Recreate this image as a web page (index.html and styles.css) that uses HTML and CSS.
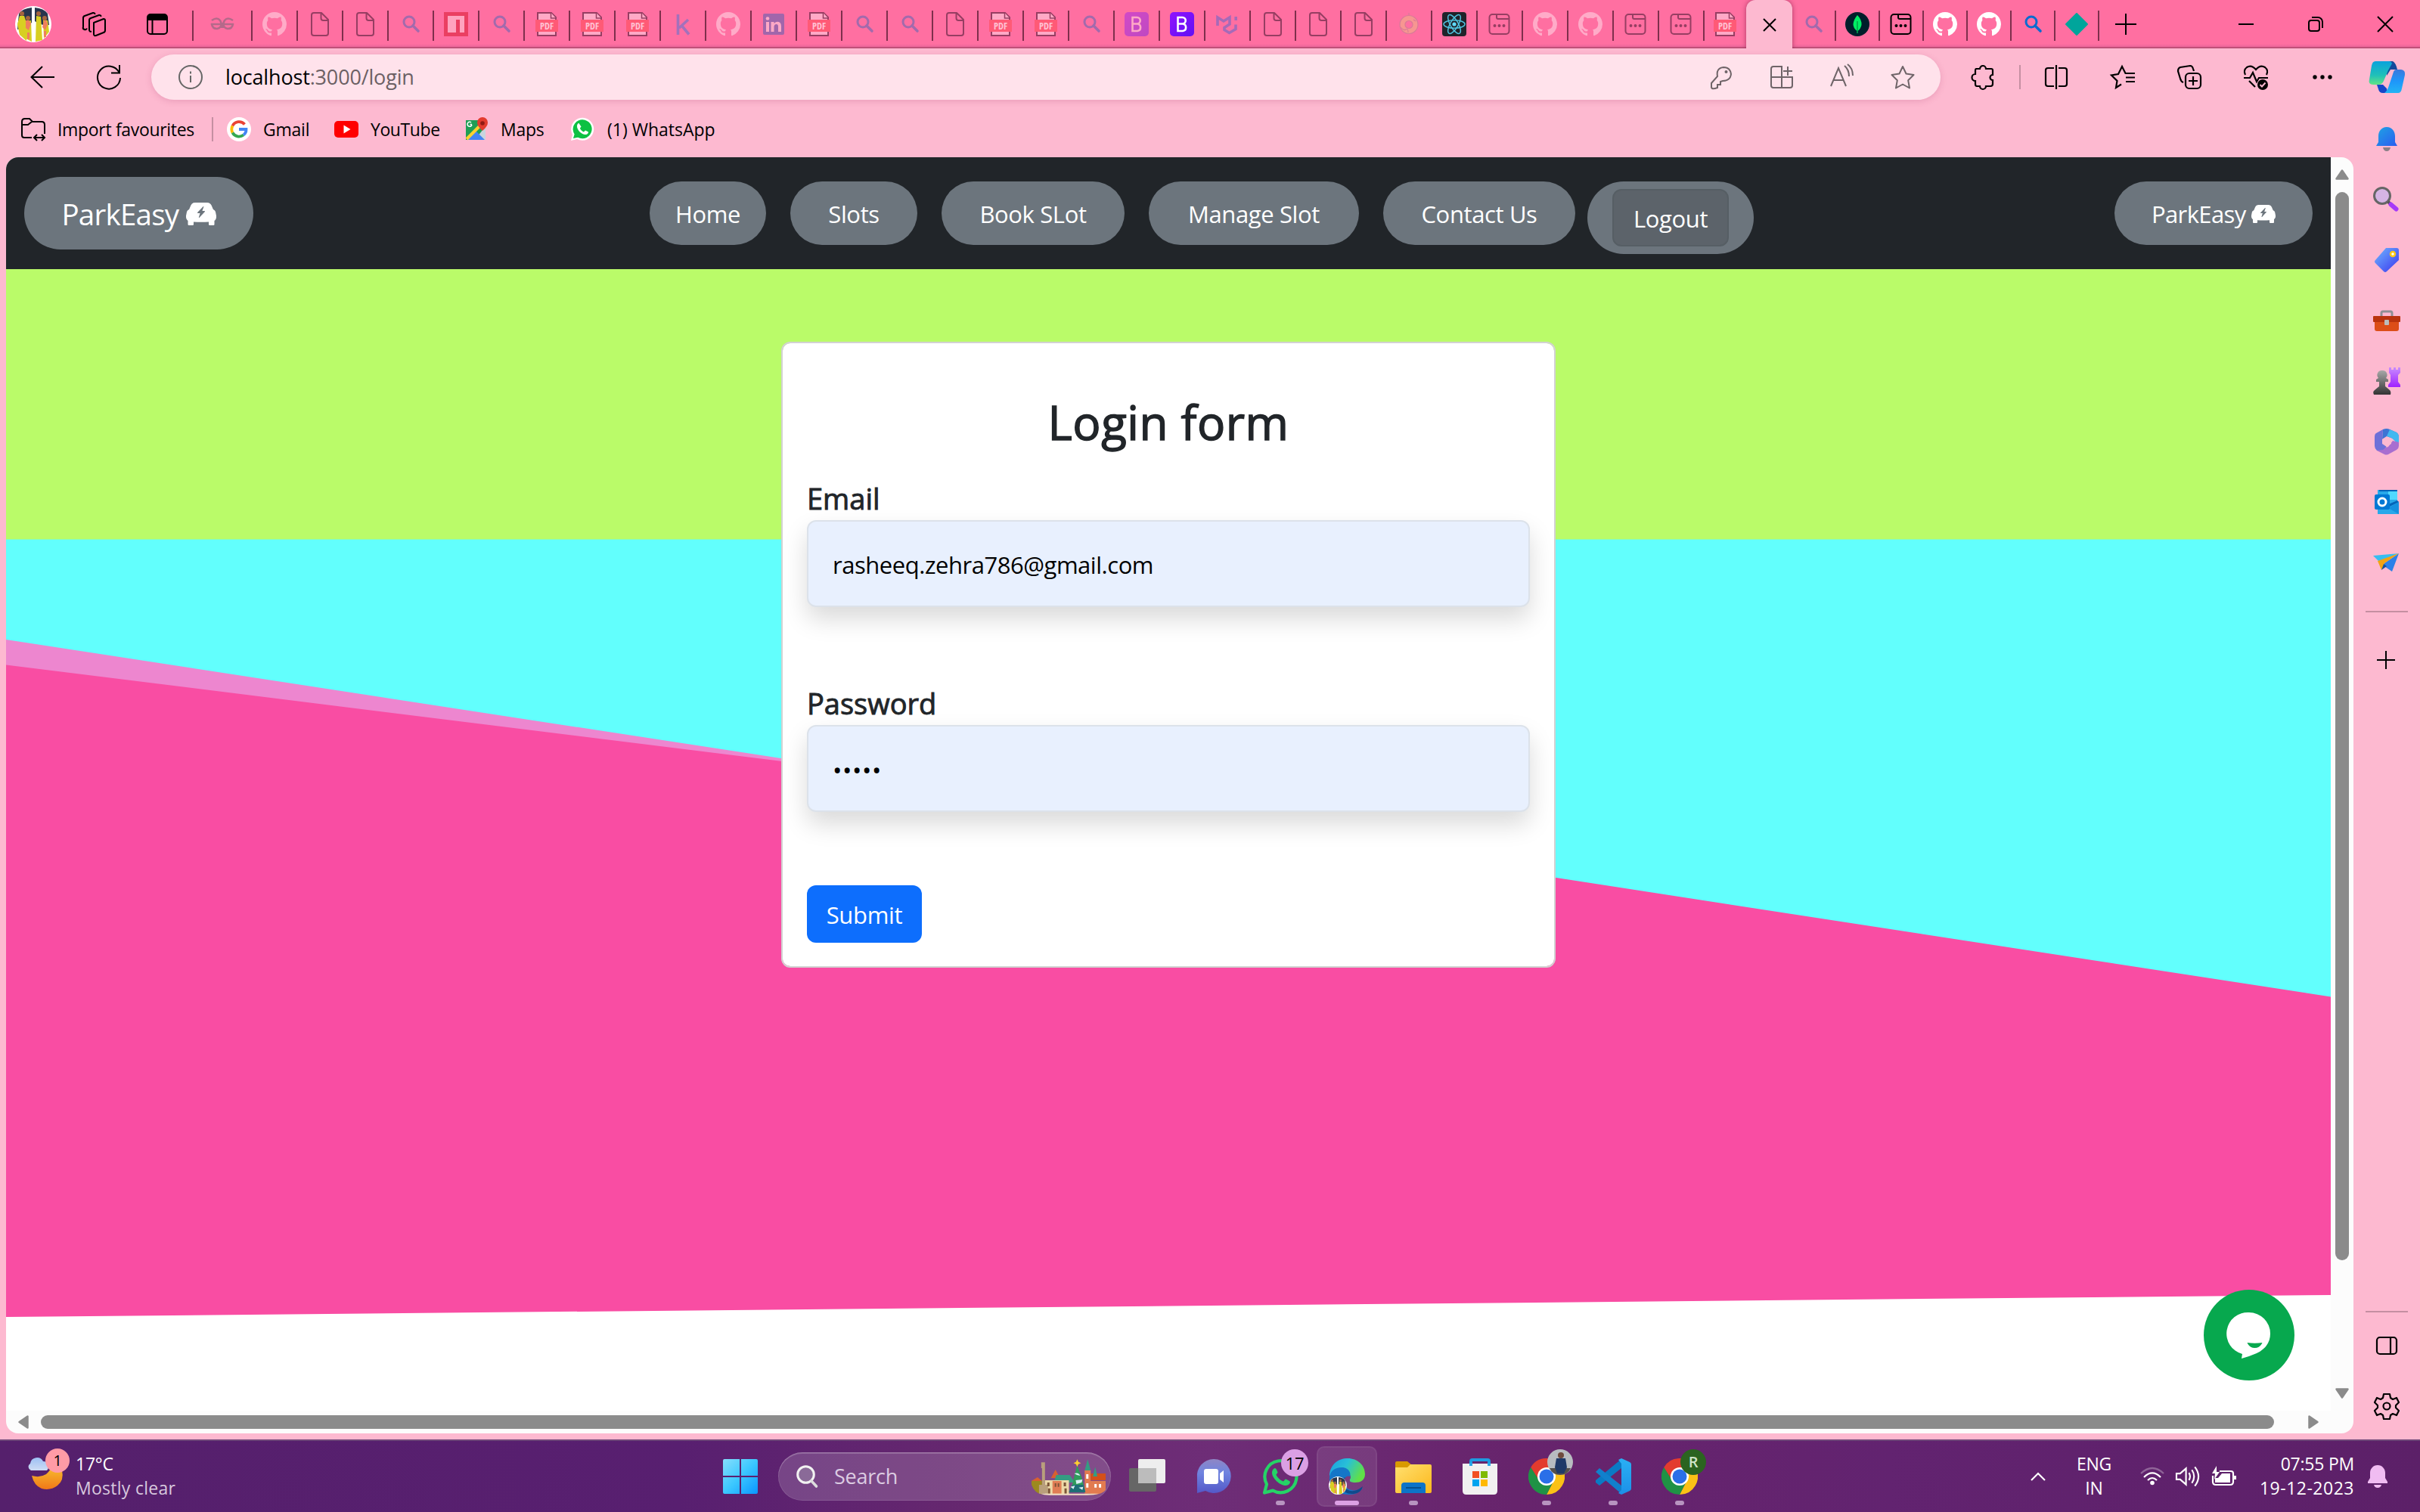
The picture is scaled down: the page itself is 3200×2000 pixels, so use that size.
FILE: index.html
```html
<!DOCTYPE html>
<html lang="en">
<head>
<meta charset="utf-8">
<title>ParkEasy - Login</title>
<link rel="stylesheet" href="styles.css">
</head>
<body>
<svg class="defs" width="0" height="0" aria-hidden="true">
  <defs>
    <linearGradient id="gBlue" x1="0" y1="0" x2="1" y2="1"><stop offset="0" stop-color="#1fa4e4"/><stop offset="1" stop-color="#2a5cf0"/></linearGradient>
    <linearGradient id="gTag" x1="0" y1="0" x2="1" y2="1"><stop offset="0" stop-color="#70b8ff"/><stop offset="1" stop-color="#3a34ee"/></linearGradient>
    <linearGradient id="gGrey" x1="0" y1="0" x2="0" y2="1"><stop offset="0" stop-color="#a8a8a8"/><stop offset="1" stop-color="#333"/></linearGradient>
    <linearGradient id="gPurple" x1="0" y1="0" x2="0" y2="1"><stop offset="0" stop-color="#c88cff"/><stop offset="1" stop-color="#a020ff"/></linearGradient>
    <linearGradient id="gCopA" x1="0" y1="0" x2="0" y2="1"><stop offset="0" stop-color="#0aa2dc"/><stop offset=".6" stop-color="#20c0b8"/><stop offset="1" stop-color="#62e484"/></linearGradient>
    <linearGradient id="gCopB" x1="0" y1="0" x2="0" y2="1"><stop offset="0" stop-color="#3a78dc"/><stop offset=".5" stop-color="#1e96fa"/><stop offset="1" stop-color="#22b4f4"/></linearGradient>
    <linearGradient id="gWin" x1="0" y1="0" x2="1" y2="1"><stop offset="0" stop-color="#86dffc"/><stop offset=".5" stop-color="#3cc8ff"/><stop offset="1" stop-color="#0a96ff"/></linearGradient>
    <linearGradient id="gMoon" x1="0" y1="0" x2="0" y2="1"><stop offset="0" stop-color="#f8c030"/><stop offset="1" stop-color="#f07818"/></linearGradient>
    <linearGradient id="gCloud" x1="0" y1="0" x2="0" y2="1"><stop offset="0" stop-color="#9cc0f4"/><stop offset="1" stop-color="#cfdcf4"/></linearGradient>
    <linearGradient id="gChat" x1="0" y1="0" x2="0" y2="1"><stop offset="0" stop-color="#8f86c4"/><stop offset=".4" stop-color="#6f84e0"/><stop offset="1" stop-color="#5458c8"/></linearGradient>
    <linearGradient id="gEdge" x1="0" y1="0" x2="1" y2=".4"><stop offset="0" stop-color="#1a9ce0"/><stop offset=".5" stop-color="#28c0d8"/><stop offset="1" stop-color="#60e048"/></linearGradient>
    <linearGradient id="gFold" x1="0" y1="0" x2="1" y2="1"><stop offset="0" stop-color="#ffe070"/><stop offset="1" stop-color="#fcb81c"/></linearGradient>
    <linearGradient id="gVs" x1="0" y1="0" x2="0" y2="1"><stop offset="0" stop-color="#2ab0f4"/><stop offset="1" stop-color="#1c90e8"/></linearGradient>
    <linearGradient id="gBoot" x1="0" y1="0" x2="1" y2="1"><stop offset="0" stop-color="#9013fe"/><stop offset="1" stop-color="#6010f4"/></linearGradient>
  </defs>
  <symbol id="github" viewBox="0 0 16 16"><path fill="currentColor" d="M8 0C3.580 0 0 3.580 0 8c0 3.540 2.290 6.530 5.470 7.590.4.07.55-.17.55-.38 0-.19-.01-.82-.01-1.490-2.010.37-2.530-.49-2.690-.94-.09-.23-.48-.94-.82-1.130-.28-.15-.68-.52-.01-.53.63-.01 1.080.58 1.230.82.72 1.210 1.870.87 2.330.66.07-.52.28-.87.51-1.070-1.780-.2-3.640-.89-3.640-3.950 0-.87.31-1.590.82-2.150-.08-.2-.36-1.020.08-2.120 0 0 .67-.21 2.200.82.64-.18 1.320-.27 2-.27s1.360.09 2 .27c1.530-1.040 2.200-.82 2.200-.82.44 1.100.16 1.920.08 2.120.51.56.82 1.270.82 2.150 0 3.070-1.870 3.750-3.650 3.950.29.25.54.73.54 1.480 0 1.070-.01 1.930-.01 2.200 0 .21.15.46.55.38A8.010 8.010 0 0 0 16 8c0-4.420-3.580-8-8-8z"/></symbol>
  <symbol id="file" viewBox="0 0 32 32"><path fill="none" stroke="currentColor" stroke-width="2" stroke-linejoin="round" d="M8 1h10l9 9v18a3 3 0 0 1-3 3H8a3 3 0 0 1-3-3V4a3 3 0 0 1 3-3zM17.500 1.500V8a3 3 0 0 0 3 3H27"/></symbol>
  <symbol id="loupe" viewBox="0 0 32 32"><g fill="none" stroke="currentColor"><circle cx="14" cy="13" r="7" stroke-width="3"/><path d="M19 18l7 7" stroke-width="3.600" stroke-linecap="round"/></g></symbol>
  <symbol id="pdf" viewBox="0 0 32 32"><path fill="#ffa9c6" stroke="#963e62" stroke-width="2" d="M4 1h18l6 6v24H4z"/><path fill="#ffa9c6" stroke="#963e62" stroke-width="1.500" d="M21.500 1v7H28"/><path fill="#ff5a76" d="M1 10h30v16H1z"/><text x="16" y="22.500" text-anchor="middle" class="pdf-label">PDF</text></symbol>
  <symbol id="npm" viewBox="0 0 32 32"><path fill="#ea3f62" d="M0 0h32v32H0z"/><path fill="#ffa3bf" d="M5 5h22v22h-6V10h-5v17H5z"/></symbol>
  <symbol id="windowdots" viewBox="0 0 32 32"><g fill="none" stroke="currentColor" stroke-width="2"><rect x="2.500" y="3" width="26" height="26" rx="4"/><path d="M12 3v4a2 2 0 0 0 2 2h14"/></g><g fill="currentColor"><circle cx="9.500" cy="18" r="2"/><circle cx="15.500" cy="18" r="2"/><circle cx="21.500" cy="18" r="2"/></g></symbol>
  <symbol id="boot" viewBox="0 0 32 32"><rect width="32" height="32" rx="5" fill="url(#gBoot)"/><path fill="none" stroke="#fff" stroke-width="2.600" d="M10.500 7v18h6.500a4.800 4.800 0 0 0 0-9.500h-6.500h6a4.200 4.200 0 0 0 0-8.500z"/></symbol>
  <symbol id="mui" viewBox="0 0 32 32"><path fill="none" stroke="#a66ab8" stroke-width="3.600" d="M3 18V7l8 5 8-5v9l-7 4.500v3l6.500 4 8.500-5v-6M27.200 11V6"/></symbol>
  <symbol id="react" viewBox="0 0 32 32"><rect width="32" height="32" rx="4" fill="#20232a"/><g fill="none" stroke="#4fc3e0" stroke-width="1.500"><ellipse cx="16" cy="16" rx="14" ry="5.200"/><ellipse cx="16" cy="16" rx="14" ry="5.200" transform="rotate(60 16 16)"/><ellipse cx="16" cy="16" rx="14" ry="5.200" transform="rotate(120 16 16)"/></g><circle cx="16" cy="16" r="2.600" fill="#61dafb"/></symbol>
  <symbol id="people" viewBox="0 0 48 48"><circle cx="24" cy="24" r="24" fill="#fff"/><path fill="#27354d" d="M5 10q5-7 17-8v20Q8 30 3 31zM26 2q12 1 17 8l2 15q-9 2-19-5z"/><g fill="#d8cf22"><path d="M6 13h6l3 9v24l-9-8-3-14zM28 13l6 1 2 31-9 2zM14 20l7-1 1 28-8-4zM37 18l6 1 2 15-7 9z"/></g><g fill="#ef7e5c"><path d="M14 19h4l3 4-3 9-4-3zM38 19h3l2 5-3 8-4-4zM16 35h3v9h-3zM38 33h3v8h-3z"/></g><g fill="#a5643f"><circle cx="9" cy="10" r="3"/><circle cx="17" cy="16" r="3"/><circle cx="31" cy="10" r="3"/><circle cx="39" cy="16" r="3"/></g></symbol>
  <symbol id="car" viewBox="0 0 16 16"><path fill="#fff" d="M2.520 3.515A2.500 2.500 0 0 1 4.820 2h6.362c1 0 1.904.596 2.298 1.515l.792 1.848c.075.175.21.319.38.404.5.25.855.715.965 1.262l.335 1.679q.05.242.049.49v.413c0 .814-.39 1.543-1 1.997V13.500a.5.5 0 0 1-.5.5h-2a.5.5 0 0 1-.5-.5v-1.338c-1.292.048-2.745.088-4 .088s-2.708-.04-4-.088V13.500a.5.5 0 0 1-.5.5h-2a.5.5 0 0 1-.5-.5v-1.892c-.61-.454-1-1.183-1-1.997v-.413a2.500 2.500 0 0 1 .049-.49l.335-1.680c.11-.546.465-1.012.964-1.261a.8.8 0 0 0 .381-.404l.792-1.848Zm6.750.51a.186.186 0 0 0-.23.034L6.050 7.246a.188.188 0 0 0 .137.316h1.241l-.673 2.195a.19.19 0 0 0 .085.218c.075.043.17.03.23-.034l2.880-3.187a.188.188 0 0 0-.137-.316H8.572l.782-2.195a.19.19 0 0 0-.085-.218Z"/></symbol>
  <symbol id="whats" viewBox="0 0 48 48"><path fill="none" stroke="currentColor" stroke-width="4.200" stroke-linejoin="round" d="M3 45.500l3-11.200A21 21 0 1 1 14.200 42.600z"/><path fill="currentColor" d="M17 13c-1 0-4 2-4 6 0 7 10 17 18 17 4 0 6-3 6-5 0-1-4-3-6-3.600-1 0-2 2.600-3 3-3-.4-9-6-9.500-8.900.5-1 2-2 2-3C20 17 18.500 13 17 13z"/></symbol>
  <symbol id="chrome" viewBox="0 0 48 48"><path fill="#e33b2e" d="M3.200 12A24 24 0 0 1 44.800 12L24 13 14 30z"/><path fill="#fbc116" d="M44.800 12A24 24 0 0 1 24 48L33.500 29.500 24 12z"/><path fill="#1f9245" d="M24 48A24 24 0 0 1 3.200 12L14.500 29.500 24 35l9.500-5.500z"/><circle cx="24" cy="24" r="12" fill="#fff"/><circle cx="24" cy="24" r="9.500" fill="#2a6fe8"/></symbol>
</svg>

<header class="tabstrip">
  <div class="strip-tools">
    <svg class="avatar"><use href="#people"/></svg>
    <svg class="workspaces" viewBox="0 0 32 32"><g fill="none" stroke="#000" stroke-width="2" stroke-linejoin="round"><path d="M16 14l13-5a2 2 0 0 1 2 2v13a3 3 0 0 1-2 3l-10 4a2 2 0 0 1-3-2z"/><path d="M13 25.500a2 2 0 0 1-3-2V11a3 3 0 0 1 2-3l11-4a2 2 0 0 1 2.500 2"/><path d="M7 21.500a2 2 0 0 1-5-2V8a3 3 0 0 1 2-3l11-4a2 2 0 0 1 2.500 2"/></g></svg>
    <svg class="tabmenu" viewBox="0 0 28 28"><rect x="1" y="1" width="26" height="26" rx="4" fill="none" stroke="#000" stroke-width="2"/><path d="M1 9V4q0-3 3-3h20q3 0 3 3v5zM6.500 9h2v18h-2z"/></svg>
  </div>
  <nav class="tabs">
    <div class="tab tab-first"><svg viewBox="0 0 32 32"><g fill="none" stroke="#b5698a" stroke-width="2.600"><path d="M2 11q7-5 11 0 2 3 2 10M1 16h30M2 15v1q1 6 7 6 6-1 6-8M30 11q-7-5-11 0-2 3-2 10M30 15v1q-1 6-7 6-6-1-6-8"/></g></svg></div>
    <div class="tab dim-white"><svg><use href="#github"/></svg></div>
    <div class="tab dim"><svg><use href="#file"/></svg></div>
    <div class="tab dim"><svg><use href="#file"/></svg></div>
    <div class="tab dim-blue"><svg><use href="#loupe"/></svg></div>
    <div class="tab"><svg><use href="#npm"/></svg></div>
    <div class="tab dim-blue"><svg><use href="#loupe"/></svg></div>
    <div class="tab"><svg><use href="#pdf"/></svg></div>
    <div class="tab"><svg><use href="#pdf"/></svg></div>
    <div class="tab"><svg><use href="#pdf"/></svg></div>
    <div class="tab dim-blue"><svg viewBox="0 0 32 32"><path fill="none" stroke="#a371bb" stroke-width="3.600" d="M9.500 3v27M23 10L11 21M14.500 18L24 29.500"/></svg></div>
    <div class="tab dim-white"><svg><use href="#github"/></svg></div>
    <div class="tab"><svg viewBox="0 0 32 32"><rect x="2" y="2" width="28" height="28" rx="2" fill="#a166ab"/><g fill="#ffa9c6"><path d="M6 13h4v13H6zM12.500 13h4v2q4-4 8-1 1.500 1.500 1.500 5v7h-4v-7q0-3-2.500-3t-3 3v7h-4z"/><circle cx="8" cy="8.500" r="2.300"/></g></svg></div>
    <div class="tab"><svg><use href="#pdf"/></svg></div>
    <div class="tab dim-blue"><svg><use href="#loupe"/></svg></div>
    <div class="tab dim-blue"><svg><use href="#loupe"/></svg></div>
    <div class="tab dim"><svg><use href="#file"/></svg></div>
    <div class="tab"><svg><use href="#pdf"/></svg></div>
    <div class="tab"><svg><use href="#pdf"/></svg></div>
    <div class="tab dim-blue"><svg><use href="#loupe"/></svg></div>
    <div class="tab faded"><svg><use href="#boot"/></svg></div>
    <div class="tab"><svg><use href="#boot"/></svg></div>
    <div class="tab"><svg><use href="#mui"/></svg></div>
    <div class="tab dim"><svg><use href="#file"/></svg></div>
    <div class="tab dim"><svg><use href="#file"/></svg></div>
    <div class="tab dim"><svg><use href="#file"/></svg></div>
    <div class="tab"><svg viewBox="0 0 32 32"><circle cx="16" cy="16.500" r="8.500" fill="none" stroke="#f79691" stroke-width="7"/><g fill="none" stroke="#d97b98" stroke-width="1.200"><circle cx="16" cy="16.500" r="12"/><circle cx="16" cy="16.500" r="5"/><path d="M5 20q4 5 7 3t3 4M16 1v3M22 10l3 2"/></g></svg></div>
    <div class="tab"><svg><use href="#react"/></svg></div>
    <div class="tab dim"><svg><use href="#windowdots"/></svg></div>
    <div class="tab dim-white"><svg><use href="#github"/></svg></div>
    <div class="tab dim-white"><svg><use href="#github"/></svg></div>
    <div class="tab dim"><svg><use href="#windowdots"/></svg></div>
    <div class="tab dim"><svg><use href="#windowdots"/></svg></div>
    <div class="tab tab-last"><svg><use href="#pdf"/></svg></div>
    <div class="tab-active"><svg viewBox="0 0 18 18"><path d="M1 1l16 16M17 1L1 17" stroke="#000" stroke-width="2"/></svg></div>
    <div class="tab narrow dim-blue"><svg><use href="#loupe"/></svg></div>
    <div class="tab narrow"><svg viewBox="0 0 32 32"><circle cx="16" cy="16" r="16" fill="#001e2b"/><path fill="#00ed64" d="M16 4q6 6 5.500 13-1 5-5 8v3h-1v-3q-5-4-5-9Q11 10 16 4z"/><path d="M16 12v13" stroke="#007a38"/></svg></div>
    <div class="tab narrow"><svg><use href="#windowdots"/></svg></div>
    <div class="tab narrow white"><svg><use href="#github"/></svg></div>
    <div class="tab narrow white"><svg><use href="#github"/></svg></div>
    <div class="tab narrow blue"><svg><use href="#loupe"/></svg></div>
    <div class="tab narrow"><svg viewBox="0 0 32 32"><path fill="#00a59b" stroke="#00a59b" stroke-width="2" stroke-linejoin="round" d="M16 2l14 14-14 14L2 16z"/></svg></div>
  </nav>
  <svg class="newtab" viewBox="0 0 28 28"><path d="M14 0v28M0 14h28" stroke="#000" stroke-width="2"/></svg>
  <div class="winctl">
    <svg viewBox="0 0 20 20"><path d="M0 10h20" stroke="#000" stroke-width="2"/></svg>
    <svg viewBox="0 0 20 20"><g fill="none" stroke="#000" stroke-width="2"><rect x="1" y="5" width="14" height="14" rx="3"/><path d="M5 1h8a6 6 0 0 1 6 6v8"/></g></svg>
    <svg viewBox="0 0 20 20"><path d="M0 0l20 20M20 0L0 20" stroke="#000" stroke-width="2"/></svg>
  </div>
</header>

<div class="toolbar">
  <svg class="ic32" viewBox="0 0 32 32"><path d="M32 16H1M16 2L1.500 16 16 30" fill="none" stroke="#000" stroke-width="2"/></svg>
  <svg class="ic32 reload" viewBox="0 0 32 32"><path d="M29.500 10A15 15 0 1 0 31 17M30 0v10.500H19" fill="none" stroke="#000" stroke-width="2"/></svg>
  <div class="address">
    <svg class="ic32" viewBox="0 0 32 32"><g fill="none" stroke="#666" stroke-width="2"><circle cx="16" cy="16" r="15"/><path d="M16 14v9M16 8.500v3"/></g></svg>
    <span class="url"><b>localhost</b>:3000/login</span>
    <div class="address-tools">
      <svg viewBox="0 0 32 32"><g fill="none" stroke="#6f6468" stroke-width="2"><path d="M11 15q-2-11 8-12 9 0 10 9-1 9-11 9l-3 1v4h-4v4q-8 3-8-1v-5z"/></g><circle cx="22.500" cy="9" r="2" fill="#6f6468"/></svg>
      <svg viewBox="0 0 32 32"><path d="M2 5q0-3 3-3h11v28H5q-3 0-3-3zM2 16h28v11q0 3-3 3H16M24 2v12M18 8h12" fill="none" stroke="#6f6468" stroke-width="2"/></svg>
      <svg viewBox="0 0 32 32"><path d="M1 28L11 4l10 24M4.500 20h13M19 1q6 5 6 14M23-1q7 5 7 15" fill="none" stroke="#6f6468" stroke-width="2"/></svg>
      <svg viewBox="0 0 32 32"><path d="M16 2l4.500 9.500 10 1.500-7.300 7.300 1.800 10.200-9-5-9 5 1.800-10.200L1.500 13l10-1.500z" fill="none" stroke="#6f6468" stroke-width="2" stroke-linejoin="round"/></svg>
    </div>
  </div>
  <div class="cell puzzle"><svg viewBox="0 0 32 32"><path d="M7 5h5a4 4 0 0 1 8 0h7q2 0 2 2v6a3.500 3.500 0 0 0 0 7v5q0 3-3 3h-6a4 4 0 0 1-8 0H8q-2 0-2-3v-4a4 4 0 0 1 0-9V8q0-3 1-3z" fill="none" stroke="#000" stroke-width="2.200"/></svg></div>
  <i class="vsep"></i>
  <div class="cell"><svg viewBox="0 0 32 32"><path d="M13 4H5Q2 4 2 7v18q0 3 3 3h8M19 4h8q3 0 3 3v18q0 3-3 3h-8M16 0v32" fill="none" stroke="#000" stroke-width="2.200"/></svg></div>
  <div class="cell"><svg viewBox="0 0 32 32"><path d="M14 25.500L7 30l1.500-9L1 13.500l9-1.500L15 2l4.500 9H32M20 16.500h12M20 22h12" fill="none" stroke="#000" stroke-width="2.200"/></svg></div>
  <div class="cell"><svg viewBox="0 0 32 32"><g fill="none" stroke="#000" stroke-width="2.200"><rect x="11" y="11" width="20" height="20" rx="5"/><path d="M21 15v12M15 21h12M8 23q-3-1-4-5L1 8q0-4 3-5l13-2q3 0 4 4l1 3"/></g></svg></div>
  <div class="cell"><svg viewBox="0 0 32 32"><path d="M2 13Q-1 7 4 3q6-4 12 3 6-7 12-3 5 4 2 10M0 17h8l4-7 5 12 3-5h12M7 21l8 8" fill="none" stroke="#000" stroke-width="2.200"/><circle cx="25" cy="26" r="7"/><path d="M21.500 26l2.500 2.500 4.500-5" stroke="#fdb9d0" stroke-width="2" fill="none"/></svg></div>
  <div class="cell"><svg viewBox="0 0 32 32"><circle cx="6" cy="16" r="2.700"/><circle cx="16" cy="16" r="2.700"/><circle cx="26" cy="16" r="2.700"/></svg></div>
  <svg class="copilot" viewBox="0 0 48 42"><path fill="#124a9c" d="M24 0h8q4 2 6 11h-9l-5 8z"/><path fill="url(#gCopA)" d="M9 0h18q3 0 4 3l-5 9-6 14q-2 5-7 5H6q-7 0-5-7L4 6q1-6 5-6z"/><path fill="#1546c8" d="M11 31h8l5 5 1 6h-6q-5 0-6-5z"/><path fill="url(#gCopB)" d="M39 42H21q4-3 6-10l6-18q1-3 4-3h6q6 1 5 7l-4 18q-1 6-5 6z"/></svg>
</div>

<div class="workspace">
  <div class="left-col">
    <div class="bookmarks">
      <svg class="ic32 import" viewBox="0 0 32 32"><path d="M14 27H4q-3 0-3-3V6q0-4 4-4h6l4 4h12q4 0 4 4v12M1 10h8l5-4M17 27h14M21 23l-4 4 4 4M27 23l4 4-4 4" fill="none" stroke="#000" stroke-width="2"/></svg>
      <span class="bm bm-import">Import favourites</span><i class="bm-sep"></i>
      <svg class="ic32 google" viewBox="0 0 32 32"><circle cx="16" cy="16" r="16" fill="#fff"/><g fill="none" stroke-width="3.800"><path stroke="#ea4335" d="M23.500 9.500a9.700 9.700 0 0 0-16 2"/><path stroke="#fbbc05" d="M7.500 11.500a9.700 9.700 0 0 0 0 9"/><path stroke="#34a853" d="M7.500 20.500a9.700 9.700 0 0 0 14.500 3"/><path stroke="#4285f4" d="M22 23.500q3.700-2.700 3.500-7.500H16"/></g></svg>
      <span class="bm bm-gmail">Gmail</span>
      <svg class="ic32" viewBox="0 0 32 32"><rect y="5" width="32" height="22" rx="5" fill="#f00"/><path fill="#fff" d="M12.500 10.500v11l9-5.500z"/></svg>
      <span class="bm bm-yt">YouTube</span>
      <svg class="ic32" viewBox="0 0 32 32"><path fill="#1f9e55" d="M2 4h26v26H2z"/><path fill="#c9d4dd" d="M28 12v18H14z"/><path fill="#4285f4" d="M15 18l12 12H4z"/><path stroke="#fcd22f" stroke-width="4" d="M3 29L23 9"/><path fill="#e33b2e" d="M24 0a7 7 0 0 1 7 7q0 5-7 11-7-6-7-11a7 7 0 0 1 7-7z"/><circle cx="24" cy="8" r="2.800" fill="#901a14"/><path d="M10 9.500H7.500M10 10a3 3 0 1 1-1-3" fill="none" stroke="#fff" stroke-width="1.500"/></svg>
      <span class="bm bm-maps">Maps</span>
      <svg class="ic32 wa" viewBox="0 0 32 32"><path fill="#fff" d="M1 31l2-8A15 15 0 1 1 9 29z"/><path fill="#0dc143" d="M4 28l1.600-5.500a12.500 12.500 0 1 1 4.500 4.200z"/><path fill="#fff" d="M11.500 8C10 8 9 10 9 12c0 5 6 11 11 11 3 0 4-2 4-3.500l-4-2-2 2c-2-.5-5-3.500-5-5l1.500-2z"/></svg>
      <span class="bm bm-wa">(1) WhatsApp</span>
    </div>

    <div class="viewport">
      <div class="site">
        <nav class="navbar">
          <a class="pill brand">ParkEasy <svg><use href="#car"/></svg></a>
          <div class="nav-list">
            <a class="pill home">Home</a><a class="pill slots">Slots</a><a class="pill book">Book SLot</a><a class="pill manage">Manage Slot</a><a class="pill contact">Contact Us</a>
            <a class="pill logout"><span class="btn-logout">Logout</span></a>
          </div>
          <a class="pill end">ParkEasy <svg><use href="#car"/></svg></a>
        </nav>
        <main class="content">
          <svg class="waves" viewBox="0 0 3074 1510" preserveAspectRatio="none"><path fill="#bafb69" d="M0 0h3074v358H0z"/><path fill="#62fffd" d="M0 357.500h3074V970L0 900z"/><path fill="#ed86cf" d="M0 490l1200 184v60L0 600z"/><path fill="#f94da3" d="M0 523.500l1142 142L3074 962.500V1357L0 1386z"/></svg>
          <form class="card">
            <h1>Login form</h1>
            <label>Email</label>
            <div class="field">rasheeq.zehra786@gmail.com</div>
            <label class="second">Password</label>
            <div class="field dots">•••••</div>
            <button type="button">Submit</button>
          </form>
          <svg class="chat" viewBox="0 0 120 120"><circle cx="60" cy="60" r="60" fill="#07a84e"/><path fill="#fff" d="M60 30a28 28 0 0 1 28 28c0 12-7 21-18 26q-9 4-20 7l1-6A28 28 0 0 1 60 30z"/><path fill="#07a84e" d="M57.500 70q10 1.500 20 0-3 7-10 7t-10-7z"/></svg>
        </main>
      </div>
      <div class="vscroll"><svg viewBox="0 0 18 14"><path d="M9 1.500L16.500 12.500h-15z"/></svg><i></i><svg class="down" viewBox="0 0 18 14"><path d="M9 12.500L16.500 1.500h-15z"/></svg></div>
      <div class="hscroll"><svg viewBox="0 0 14 18"><path d="M1.500 9L12.500 1.500v15z"/></svg><i></i><svg viewBox="0 0 14 18"><path d="M12.500 9L1.500 1.500v15z"/></svg></div>
    </div>
  </div>

  <aside class="sidebar">
    <div class="side"><svg viewBox="0 0 36 36"><path fill="url(#gBlue)" d="M18 2c7 0 11 6 11 12v8l3 5H4l3-5v-8C7 8 11 2 18 2z"/><path fill="#8a7f86" d="M13 29h10q-1 5-5 5t-5-5z"/></svg></div>
    <div class="side"><svg viewBox="0 0 36 36"><circle cx="12" cy="13" r="10.500" fill="#d5b4e4" stroke="#666" stroke-width="3"/><path d="M20 21l3 3" stroke="#555" stroke-width="4"/><path d="M23.500 24.500l7 6" stroke="#a63af8" stroke-width="6" stroke-linecap="round"/></svg></div>
    <div class="side"><svg viewBox="0 0 36 36"><path fill="url(#gTag)" d="M17 2h14q3 0 3 3v13L18 33q-2 2-4 0L3 22q-2-2 0-4z"/><circle cx="26" cy="10" r="3" fill="#fff" stroke="#ffc814" stroke-width="2.500"/></svg></div>
    <div class="side"><svg viewBox="0 0 36 36"><path d="M11 12V8q0-2 2-2h10q2 0 2 2v4" fill="none" stroke="#8f8f94" stroke-width="3"/><rect x="2" y="14" width="32" height="18" rx="3" fill="#dc4d18"/><rect y="12" width="36" height="8" rx="1" fill="#b9330e"/><rect x="15" y="17" width="6" height="7" rx="1" fill="#bbb"/></svg></div>
    <div class="side"><svg viewBox="0 0 36 36"><path fill="url(#gPurple)" d="M21 0h3v3h3V0h3v3h3V0h3v7l-3 3v9l3 4v3H20v-3l3-4v-9l-2-3z"/><path fill="url(#gGrey)" d="M12 4a6 6 0 0 1 5 10l3 2v3h-4v6l6 5q2 2 1 6H1q-2-4 1-6l6-5v-6H4v-3l3-2A6 6 0 0 1 12 4z"/></svg></div>
    <div class="side"><svg viewBox="0 0 36 36"><path fill="#3c74d4" d="M13 2q5-2 9 0l9 4q3 2 3 5v11l-8-8-8-3-6 4z"/><path fill="#42b8f0" d="M22 2l9 4q3 2 3 5v11l-10-9-6-2z"/><path fill="#a86ed0" d="M34 19v5q0 3-3 5l-11 6q-3 1-5 0L5 30l15-5 6-8z"/><path fill="#6d70d8" d="M13 2L4 7q-2 1-2 5v12q0 3 3 6l8-1 5-4-6-5z"/><path fill="#fdb9d0" d="M18 12l6 3v6l-6 4-6-4v-6z"/></svg></div>
    <div class="side"><svg viewBox="0 0 36 36"><path fill="#28a8ea" d="M8 2h24v15l2 1v16H6V2z"/><path fill="#50d9ff" d="M20 4h12v11H20z"/><path fill="#0364b8" d="M8 2h24v2H8zM34 18L18 26v-4l14-6z"/><path fill="#1490df" d="M34 18v16L20 26z"/><rect x="2" y="8" width="20" height="20" rx="2" fill="#0078d4"/><circle cx="12" cy="18" r="5" fill="none" stroke="#fff" stroke-width="3"/></svg></div>
    <div class="side"><svg viewBox="0 0 36 36"><path fill="#37bdf0" d="M0 9l34-3L8 17z"/><path fill="#2c80e8" d="M34 6L25 30 12 21z"/><path fill="#f2a312" d="M34 6L6 16l5 12 4-9z"/><path fill="#14509c" d="M11 28l3-8 4 3z"/></svg></div>
    <i class="hr"></i>
    <div class="side plus"><svg viewBox="0 0 36 36"><path d="M17 6v24M5 18h24" stroke="#000" stroke-width="2"/></svg></div>
    <i class="hr hr-bottom"></i>
    <div class="side"><svg viewBox="0 0 36 36"><rect x="5" y="7" width="26" height="22" rx="4" fill="none" stroke="#000" stroke-width="2.200"/><path d="M23 7v22" stroke="#000" stroke-width="2.200"/></svg></div>
    <div class="side"><svg viewBox="0 0 36 36"><g fill="none" stroke="#000" stroke-width="2.200" stroke-linejoin="round"><path d="M14 2h8l1 5 3 2 5-2 3 6-4 4v3l4 4-3 6-5-2-3 2-1 5h-8l-1-5-3-2-5 2-3-6 4-4v-3l-4-4 3-6 5 2 3-2z"/><circle cx="18" cy="18" r="4.500"/></g></svg></div>
  </aside>
</div>

<footer class="taskbar">
  <div class="weather">
    <div class="weather-icon"><svg viewBox="0 0 48 48"><path fill="url(#gMoon)" d="M46 20Q49 33 40 40q-9 7-21 4-10-4-13-17 11 3 19-2 6-5 7-11z"/><path fill="url(#gCloud)" d="M5 20a5 5 0 0 1-1-9 9 9 0 0 1 17-3 7 7 0 0 1 5 12z"/></svg><b>1</b></div>
    <div class="weather-text"><span>17°C</span><span class="soft">Mostly clear</span></div>
  </div>
  <div class="apps">
    <div class="app start"><svg viewBox="0 0 46 46"><path fill="url(#gWin)" d="M2 0h20v22H0V2q0-2 2-2zM24 0h20q2 0 2 2v20H24zM0 24h22v22H2q-2 0-2-2zM24 24h22v20q0 2-2 2H24z"/></svg></div>
    <div class="search">
      <svg class="search-ic" viewBox="0 0 28 30"><circle cx="12.500" cy="12.500" r="10.800" fill="#8a6a98" stroke="#f2f2f2" stroke-width="3"/><path d="M20 21l6.500 7" stroke="#ddd" stroke-width="3.600" stroke-linecap="round"/></svg>
      <span>Search</span>
      <svg class="town" viewBox="0 0 100 48"><path fill="#9c8a1e" d="M0 29l8-4 6 4v18q-10-2-14-13z"/><path fill="#d86030" d="M0 29l8-5 6 5zM26 25l6-11 6 11z"/><path fill="#359c82" d="M33 21h18l7 10H30z"/><path fill="#ecd9a8" d="M18 28h32v19H18z"/><path fill="#e07d54" d="M28 29h12v17H28z"/><path fill="#b99f7c" d="M14 10h4v26h-4zM13 4h5v8h-5zM10 34h12v12H10z"/><path fill="#7c5438" d="M21 31h3v5h-3zM31 32h2v5h-2zM35 32h2v5h-2zM43 31h3v5h-3zM22 39h3v7h-3zM44 39h3v7h-3z"/><path fill="#e27b50" d="M71 15h8v31h-8zM79 29h20v12q-5 7-20 6z"/><path fill="#d4501a" d="M79 19h20v9H79z"/><path fill="#359c82" d="M75 0l4 15h-8zM85 10l3 13h-6z"/><path fill="#fff" d="M73 20h3v6h-3zM84 33h3v5h-3zM90 33h3v5h-3zM73 32h3v6h-3z"/><path fill="#2f9c5c" d="M61 8l6 16 2 8 3 12H50l5-12 2-9z"/><path fill="#1d6d76" d="M55 34h14l3 10H50z"/><path fill="#d8eef4" d="M57 19q6-2 8 3-4 0-8-3zM59 28l9-1-1 4-7 2zM52 37l6-2-2 5zM63 38l6-1-1 4z"/><path fill="#ffd030" d="M61 0l1.500 3.500L66 5l-3.500 1.500L61 10l-1.500-3.500L56 5l3.500-1.500z"/><path fill="#f2dfc4" d="M12 46h78q-6 2-16 2H24q-8 0-12-2z"/></svg>
    </div>
    <div class="app taskview"><svg viewBox="0 0 48 48"><rect y="13" width="36" height="31" rx="2" fill="#666"/><rect x="12" y="1" width="36" height="32" rx="2" fill="#eee"/><path fill="#bcbcbc" d="M12 13h24v20H12z"/></svg></div>
    <div class="app"><svg viewBox="0 0 48 48"><path fill="url(#gChat)" d="M24 1a22.500 22.500 0 1 1-11 42L2 46V26A22 22 0 0 1 24 1z"/><rect x="11" y="14" width="19" height="20" rx="3" fill="#fff"/><path fill="#fff" d="M32 20l5-4v16l-5-4z"/></svg></div>
    <div class="app run wa-app"><svg viewBox="0 0 48 48"><use href="#whats"/></svg><b class="badge">17</b></div>
    <div class="app run current"><svg viewBox="0 0 48 48"><path fill="url(#gEdge)" d="M1 24C1 10 11 0 25 0c13 0 23 9 23 21 0 8-6 11-13 11-5 0-8-1-7-4 3-4-1-10-8-11C10 15 3 20 1 24z"/><path fill="#1476c8" d="M1 25C2 17 8 12 17 12c8 0 13 6 11 12-4-2-8 2-8 7 0 7 8 13 17 11q5-1 8-3-6 9-18 9C10 48 0 38 1 25z"/><path fill="#104a8c" d="M22 25q-6 9 2 16 9 6 21-4-2 9-12 10-14 1-18-11 0-8 7-11z"/><svg y="24" width="24" height="24" viewBox="0 0 48 48"><use href="#people"/></svg></svg></div>
    <div class="app run"><svg viewBox="0 0 48 48"><path fill="#d89a00" d="M0 6q0-2 2-2h14l6 5v8H0z"/><path fill="url(#gFold)" d="M0 12h16l4-4h26q2 0 2 2v34q0 2-2 2H2q-2 0-2-2z"/><path fill="#0c74c8" d="M8 46V36q0-4 4-4h24q4 0 4 4v10z"/><path d="M14 39h20" stroke="#05508f" stroke-width="2"/></svg></div>
    <div class="app"><svg viewBox="0 0 48 48"><path fill="none" stroke="#1e9be0" stroke-width="4" d="M12 10V4q0-2 2-2h20q2 0 2 2v6"/><path fill="#f1f1f1" d="M1 7h46v36q0 5-5 5H6q-5 0-5-5z"/><path d="M12 10V6M36 10V6" stroke="#28a8ea" stroke-width="4"/><path fill="#f25022" d="M14 17h9v9h-9z"/><path fill="#7fba00" d="M25 17h9v9h-9z"/><path fill="#00a4ef" d="M14 28h9v9h-9z"/><path fill="#ffb900" d="M25 28h9v9h-9z"/></svg></div>
    <div class="app run"><svg><use href="#chrome"/></svg><svg class="user" viewBox="0 0 34 34"><circle cx="17" cy="17" r="17" fill="#b8bcc0"/><path fill="#55504c" d="M3 25h28q-4 9-14 9T3 25z"/><path fill="#203a68" d="M12 12h12l2 12-4 8h-9l-3-8z"/><circle cx="18" cy="8" r="4" fill="#6e4a3c"/></svg></div>
    <div class="app run"><svg viewBox="0 0 48 48"><path fill="#0a7ac4" d="M35 1v12L6 36l-5-4v-3z"/><path fill="#1180cc" d="M1 18l5-5 29 23v11z"/><path fill="url(#gVs)" d="M35 0l11 5q2 1 2 3v32q0 2-2 3l-11 5-4-2 4-4V7l-4-5z"/></svg></div>
    <div class="app run"><svg><use href="#chrome"/></svg><b class="user letter">R</b></div>
  </div>
  <div class="tray">
    <svg class="chev" viewBox="0 0 20 12"><path d="M1 11l9-9 9 9" fill="none" stroke="#fff" stroke-width="2.200"/></svg>
    <div class="lang"><span>ENG</span><span>IN</span></div>
    <svg class="wifi" viewBox="0 0 32 26"><g fill="none" stroke="#fff" stroke-width="2.200"><path d="M1 9q15-14 30 0" opacity=".3"/><path d="M5 14q11-11 22 0M10 18q6-6 12 0"/></g><circle cx="16" cy="21.500" r="2.800" fill="#fff"/></svg>
    <svg class="vol" viewBox="0 0 34 28"><g fill="none" stroke="#fff" stroke-width="2.200"><path d="M1 10h5l8-7v22l-8-7H1zM18 9q3 5 0 10M22 5q6 9 0 18M26 1q10 13 0 26"/></g></svg>
    <svg class="bat" viewBox="0 0 32 28"><path d="M10 7h15q3 0 3 3v11q0 4-4 4H5q-4 0-4-4v-8" fill="none" stroke="#fff" stroke-width="2.200"/><path fill="#fff" d="M13 10h11v12H4v-6h4zM29 13h3v5h-3zM6 0L0 10h4l-1 8 7-10H6z"/></svg>
    <div class="clock"><span>07:55 PM</span><span class="date">19-12-2023</span></div>
    <svg class="bell" viewBox="0 0 26 30"><path fill="#f0bcf2" d="M13 0c6 0 10 5 10 10v7l3 5v2H0v-2l3-5v-7C3 5 7 0 13 0zM8 26h10q-1 4-5 4t-5-4z"/></svg>
  </div>
</footer>
</body>
</html>
```
FILE: styles.css
```css
* { box-sizing: border-box; }
body { margin: 0; width: 3200px; height: 2000px; overflow: hidden; display: flex; flex-direction: column; background: #fdb9d0; color: #000; font: 23px/32px "Open Sans", "Noto Sans", sans-serif; letter-spacing: -0.01em; }
svg { display: block; flex: none; overflow: visible; }
.defs { position: absolute; }
.pdf-label { font: 800 12.5px "Open Sans Condensed", "Open Sans", sans-serif; fill: #ffc2d4; letter-spacing: 0; }
.ic32 { width: 32px; height: 32px; }

.tabstrip { height: 64px; flex: none; display: flex; align-items: center; background: linear-gradient(#ff6fa1 0 58px, #e9669a 62px, #c05078 62px); }
.strip-tools { display: flex; align-items: center; width: 254px; flex: none; padding-left: 20px; }
.avatar { width: 48px; height: 48px; }
.workspaces { width: 32px; height: 32px; margin-left: 40px; }
.tabmenu { width: 28px; height: 28px; margin-left: 54px; }
.tabs { display: flex; height: 64px; align-items: center; flex: none; }
.tab { width: 60px; height: 40px; padding-right: 1px; margin-top: 3px; border-right: 2px solid #7e2f4c; display: flex; align-items: center; justify-content: center; }
.tab svg { width: 32px; height: 32px; margin-bottom: 4px; }
.tab-first { width: 80px; border-left: 2px solid #7e2f4c; }
.tab-last { width: 55px; padding-left: 0; border-right: 0; }
.tab-active { width: 61px; height: 64px; background: #fdb9d0; border-radius: 12px 12px 0 0; display: flex; align-items: center; justify-content: center; box-shadow: 0 0 6px rgba(90, 0, 40, .5); clip-path: inset(0 -8px 0 -8px); }
.tab-active svg { width: 18px; height: 18px; margin-top: 2px; }
.narrow { width: 58px; }
.dim { color: #963e62; }
.dim-white { color: #ffabc8; }
.dim-blue { color: #a36aac; }
.white { color: #fff; }
.blue { color: #0a6cd0; }
.faded svg { opacity: .4; }
.newtab { width: 28px; height: 28px; margin-left: 21px; }
.winctl { display: flex; margin-left: auto; padding-right: 36px; gap: 72px; }
.winctl svg { width: 20px; height: 20px; }

.toolbar { height: 76px; flex: none; display: flex; align-items: center; padding: 0 20px 0 40px; }
.reload { margin-left: 56px; }
.address { margin-left: 40px; width: 2366px; height: 60px; border-radius: 30px; background: #ffe2eb; display: flex; align-items: center; padding: 0 10px 0 36px; box-shadow: 0 2px 8px rgba(150, 40, 90, .18); }
.url { margin-left: 30px; font-size: 27px; letter-spacing: -0.006em; color: #6c6064; }
.url b { font-weight: 400; color: #000; }
.address-tools { display: flex; gap: 48px; margin-left: auto; padding: 0 24px; }
.address-tools svg, .cell svg { width: 32px; height: 32px; }
.cell { width: 80px; margin-right: 8px; display: flex; justify-content: center; }
.puzzle { margin-left: 16px; }
.vsep { width: 2px; height: 32px; background: #c58fa2; margin-right: 7px; }
.copilot { width: 48px; height: 42px; margin-left: auto; }

.workspace { display: flex; height: 1764px; flex: none; }
.left-col { width: 3112px; }
.bookmarks { height: 68px; display: flex; align-items: center; padding: 0 0 6px 28px; font-size: 23px; }
.bm { white-space: nowrap; flex: none; }
.bm-import { margin-left: 16px; width: 204px; letter-spacing: -0.014em; }
.bm-sep { width: 2px; height: 32px; background: #c58fa2; margin-right: 18px; }
.bm-gmail { margin-left: 16px; width: 94px; }
.bm-yt { margin-left: 16px; width: 124px; letter-spacing: -0.018em; }
.bm-maps { margin-left: 16px; width: 92px; }
.bm-wa { margin-left: 17px; letter-spacing: 0; }

.viewport { position: relative; margin-left: 8px; width: 3104px; height: 1688px; border-radius: 16px; overflow: hidden; background: #fcfcfc; display: grid; grid-template: 1658px 30px / 3074px 30px; }
.site { display: flex; flex-direction: column; background: #fff; color: #fff; }
.navbar { height: 148px; flex: none; background: #212529; display: flex; align-items: center; padding: 0 24px; }
.pill { height: 84px; padding-top: 2px; border-radius: 42px; background: #6c757d; display: flex; align-items: center; justify-content: center; font-size: 31px; letter-spacing: -0.012em; white-space: pre; }
.pill svg { width: 32px; height: 32px; }
.brand { width: 303px; height: 96px; border-radius: 48px; font-size: 38.5px; letter-spacing: -0.02em; margin-right: 524px; }
.brand svg { width: 40px; height: 40px; }
.nav-list { display: flex; gap: 32px; align-self: flex-start; margin-top: 32px; }
.home { width: 154px; } .slots { width: 168px; } .book { width: 242px; } .manage { width: 278px; } .contact { width: 254px; }
.logout { width: 220px; height: 96px; padding-top: 0; border-radius: 48px; margin-left: -16px; }
.btn-logout { width: 154px; height: 76px; padding-top: 2px; border: 2px solid #565e64; border-radius: 12px; background: #5c636a; display: flex; align-items: center; justify-content: center; }
.end { width: 262px; margin-left: auto; letter-spacing: -0.02em; }

.content { position: relative; flex: 1; padding-top: 96px; color: #212529; }
.waves { position: absolute; left: 0; top: 0; width: 3074px; height: 1510px; }
.card { position: relative; width: 1024px; height: 828px; margin: 0 auto; padding: 66px 32px 0; background: #fff; border: 2px solid #d2d2d2; border-radius: 12px; background-clip: padding-box; }
h1 { margin: 0 0 38px; text-align: center; font-size: 62px; line-height: 77px; font-weight: 400; letter-spacing: 0.008em; -webkit-text-stroke: 1.4px #212529; }
label { display: block; font-size: 38px; line-height: 48px; font-weight: 400; letter-spacing: 0; -webkit-text-stroke: .9px #212529; }
.second { margin-top: 103px; }
.field { margin-top: 5px; height: 115px; border: 2px solid #dce2ea; border-radius: 12px; background: #e8f0fe; box-shadow: 0 16px 32px rgba(0, 0, 0, .15); display: flex; align-items: center; padding: 2px 32px 0; font-size: 31px; color: #000; letter-spacing: -0.015em; }
.dots { font-size: 33px; letter-spacing: .018em; padding-top: 5px; }
button { display: block; margin-top: 97px; width: 152px; height: 76px; border: 0; border-radius: 12px; background: #0d6efd; color: #fff; font: 31px "Open Sans", sans-serif; letter-spacing: -0.01em; padding: 2px 0 0; }
.chat { position: absolute; right: 48px; top: 1350px; width: 120px; height: 120px; }
.vscroll { display: flex; flex-direction: column; align-items: center; padding: 16px 0; }
.vscroll svg, .hscroll svg { fill: #8b8b8b; stroke: #8b8b8b; stroke-width: 2.5; stroke-linejoin: round; }
.vscroll svg { width: 18px; height: 14px; }
.vscroll i { width: 18px; height: 1413px; margin: 16px 0 169px; border-radius: 9px; background: #8b8b8b; }
.hscroll { display: flex; align-items: center; padding-left: 16px; }
.hscroll svg { width: 14px; height: 18px; }
.hscroll i { width: 2953px; height: 18px; margin: 0 45px 0 16px; border-radius: 9px; background: #8b8b8b; }

.sidebar { width: 88px; display: flex; flex-direction: column; align-items: center; padding: 4px 0; }
.side { width: 80px; height: 80px; display: flex; align-items: center; justify-content: center; }
.side svg { width: 36px; height: 36px; }
.hr { width: 56px; height: 2px; background: #c58fa2; margin: 24px 0 23px; }
.hr-bottom { margin: auto 0 4px; }

.taskbar { position: relative; flex: none; height: 96px; border-top: 2px solid #6e4778; background: linear-gradient(90deg, #55206c 0, #581f70 900px, #65276f 1250px, #6e2d77 1600px, #67246c 2000px, #622370 2500px, #5c2068 3200px); color: #fff; display: flex; align-items: center; }
.weather { display: flex; align-items: center; padding-left: 36px; width: 935px; }
.weather-icon { position: relative; width: 48px; height: 48px; margin-right: 16px; }
.weather-icon svg { width: 48px; height: 48px; margin-top: -4px; }
.weather-icon b { position: absolute; left: 24px; top: -13px; width: 32px; height: 32px; border-radius: 50%; background: #ff9ba6; color: #000; font-size: 20px; font-weight: 400; text-align: center; }
.weather-text, .lang, .clock { display: flex; flex-direction: column; margin-top: -2px; }
.soft { color: #d8c9de; letter-spacing: .012em; }
.apps { display: flex; align-items: center; gap: 8px; }
.app { position: relative; width: 80px; height: 80px; display: flex; align-items: center; justify-content: center; border-radius: 10px; }
.app > svg { width: 48px; height: 48px; }
.app.start { width: 88px; }
.start > svg { width: 46px; height: 46px; }
.current { background: rgba(255, 255, 255, .09); box-shadow: inset 0 0 0 2px rgba(255, 255, 255, .06); }
.run::after { content: ""; position: absolute; left: 34px; bottom: 2px; width: 12px; height: 6px; border-radius: 3px; background: #b894c0; }
.current::after { left: 24px; width: 32px; background: #dca0e4; }
.wa-app { color: #25d366; }
.badge { position: absolute; left: 41px; top: 4px; width: 36px; height: 36px; border-radius: 50%; background: #dba0e4; color: #000; font: 400 22px/36px "Open Sans", sans-serif; text-align: center; }
.app .user { position: absolute; left: 41px; top: 4px; width: 34px; height: 34px; }
.letter { border-radius: 50%; background: #2b6420; color: #cfe4c8; font: 600 20px/34px "Open Sans", sans-serif; text-align: center; }
.search { width: 440px; height: 64px; margin-left: -2px; border-radius: 32px; background: rgba(255, 255, 255, .16); box-shadow: inset 0 2px 0 rgba(255, 255, 255, .18), inset 0 0 0 1px rgba(255, 255, 255, .1); display: flex; align-items: center; padding: 0 6px 0 24px; font-size: 27px; color: #dccce2; }
.search-ic { width: 28px; height: 30px; margin-right: 22px; }
.town { width: 99px; height: 48px; margin-left: auto; margin-top: 2px; }
.tray { display: flex; align-items: center; margin-left: auto; padding-right: 43px; }
.chev { width: 20px; height: 12px; }
.lang { width: 58px; margin-left: 35px; text-align: center; }
.wifi { width: 32px; height: 26px; margin-left: 32px; }
.vol { width: 33px; height: 28px; margin-left: 15px; }
.bat { width: 32px; height: 28px; margin-left: 15px; }
.clock { width: 136px; margin-left: 20px; text-align: right; }
.date { letter-spacing: .022em; }
.bell { width: 26px; height: 30px; margin-left: 18px; }
```
